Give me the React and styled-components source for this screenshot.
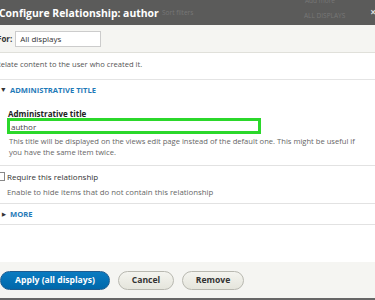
import styled, { createGlobalStyle } from "styled-components";

const Global = createGlobalStyle`
  html, body {
    margin: 0;
    padding: 0;
    background: #fff;
    overflow: hidden;
  }
  body {
    font-family: "Open Sans", "Noto Sans", sans-serif;
    color: #333;
  }
`;

const Dialog = styled.div({
  width: "375px",
  height: "300px",
  display: "flex",
  flexDirection: "column",
  background: "#fff",
  borderBottom: "2px solid #666",
  boxSizing: "border-box",
  overflow: "hidden",
});

const TitleBar = styled.div({
  height: "25px",
  flexShrink: 0,
  background: "#5b5b5a",
  display: "flex",
  alignItems: "center",
  position: "relative",
});

const Title = styled.h1({
  margin: 0,
  marginLeft: "-1px",
  fontSize: "10.4px",
  fontWeight: "bold",
  color: "#fff",
});

const Ghost = styled.span`
  position: absolute;
  left: ${(p) => p.left}px;
  top: ${(p) => p.top}px;
  font-size: 6.5px;
  color: #777;
  white-space: nowrap;
`;

const Close = styled.span({
  position: "absolute",
  right: "-1px",
  top: "5px",
  fontSize: "10px",
  color: "#ddd",
  fontWeight: "bold",
});

const DisplayBar = styled.div({
  height: "27px",
  flexShrink: 0,
  background: "#f5f5f2",
  borderBottom: "1px solid #e0e0da",
  display: "flex",
  alignItems: "center",
  gap: "3px",
  fontSize: "8px",
});

const ForLabel = styled.label({
  fontWeight: "bold",
  color: "#333",
  marginLeft: "-3px",
});

const SelectBox = styled.div({
  width: "86px",
  height: "16px",
  boxSizing: "border-box",
  border: "1px solid #ccc",
  background: "#fff",
  display: "flex",
  alignItems: "center",
  paddingLeft: "4px",
  color: "#333",
});

const Body = styled.div({
  flex: 1,
  display: "flex",
  flexDirection: "column",
  fontSize: "7.6px",
  color: "#444",
});

const Intro = styled.p({
  margin: 0,
  padding: "6px 0 10px",
  marginLeft: "-4px",
  borderBottom: "1px solid #e4e4e4",
  color: "#555",
});

const Section = styled.div`
  border-bottom: 1px solid #e2e2e2;
  padding: ${(p) => p.pad || "0"};
`;

const Summary = styled.div({
  display: "flex",
  alignItems: "center",
  gap: "4px",
  padding: "5px 0 5px 2px",
  color: "#1f7ab8",
  fontWeight: "bold",
  fontSize: "7.6px",
  textTransform: "uppercase",
});

const Arrow = styled.span`
  font-size: 5px;
  color: #333;
  display: inline-block;
  transform: ${(p) => (p.open ? "rotate(90deg)" : "none")};
`;

const Field = styled.div({
  padding: "9px 8px 7px 7px",
});

const FieldLabel = styled.div({
  fontWeight: "bold",
  fontSize: "8px",
  lineHeight: "9px",
  color: "#222",
  marginLeft: "1px",
});

const TextInput = styled.div({
  width: "254px",
  height: "16px",
  boxSizing: "border-box",
  border: "3px solid #2bd82b",
  display: "flex",
  alignItems: "center",
  paddingLeft: "1px",
  color: "#444",
  fontSize: "8px",
  background: "#fff",
});

const Desc = styled.div({
  marginTop: "2px",
  marginLeft: "2px",
  lineHeight: "11px",
  color: "#666",
});

const CheckRow = styled.div({
  display: "flex",
  alignItems: "center",
  gap: "2px",
  marginLeft: "-3px",
  marginTop: "5px",
  color: "#333",
  fontSize: "8px",
});

const CheckBox = styled.span({
  width: "6px",
  height: "7px",
  border: "1px solid #888",
  background: "#fff",
  display: "inline-block",
});

const Help = styled.div({
  margin: "5px 0 0 7px",
  color: "#666",
  fontSize: "7.8px",
});

const Footer = styled.div({
  height: "36px",
  flexShrink: 0,
  background: "#f5f5f2",
  display: "flex",
  alignItems: "center",
  gap: "8px",
});

const Button = styled.button`
  height: 19px;
  padding: 0 8px;
  border-radius: 10px;
  font-family: "Open Sans", "Noto Sans", sans-serif;
  font-weight: bold;
  font-size: 8.6px;
  cursor: pointer;
  border: 1px solid ${(p) => (p.primary ? "#1e5c90" : "#b8b8b0")};
  color: ${(p) => (p.primary ? "#fff" : "#333")};
  background: ${(p) =>
    p.primary
      ? "linear-gradient(#0a7bc1, #0068aa)"
      : "linear-gradient(#f4f4ef, #e5e5dc)"};
  width: ${(p) => p.w}px;
`;

const App = () => {
  return (
    <Dialog>
      <Global />
      <TitleBar>
        <Title>Configure Relationship: author</Title>
        <Ghost left={162} top={8}>Sort filters</Ghost>
        <Ghost left={305} top={-4}>Add more</Ghost>
        <Ghost left={304} top={11}>ALL DISPLAYS</Ghost>
        <Close>×</Close>
      </TitleBar>

      <DisplayBar>
        <ForLabel>For:</ForLabel>
        <SelectBox>All displays</SelectBox>
      </DisplayBar>

      <Body>
        <Intro>Relate content to the user who created it.</Intro>

        <Section>
          <Summary>
            <Arrow open>▶</Arrow>Administrative title
          </Summary>
          <Field>
            <FieldLabel>Administrative title</FieldLabel>
            <TextInput>author</TextInput>
            <Desc>
              This title will be displayed on the views edit page instead of
              the default one. This might be useful if you have the same item
              twice.
            </Desc>
          </Field>
        </Section>

        <Section pad="0 0 6px">
          <CheckRow>
            <CheckBox />
            Require this relationship
          </CheckRow>
          <Help>Enable to hide items that do not contain this relationship</Help>
        </Section>

        <Section>
          <Summary>
            <Arrow>▶</Arrow>More
          </Summary>
        </Section>
      </Body>

      <Footer>
        <Button primary w={110}>Apply (all displays)</Button>
        <Button w={56}>Cancel</Button>
        <Button w={62}>Remove</Button>
      </Footer>
    </Dialog>
  );
};

export default App;
